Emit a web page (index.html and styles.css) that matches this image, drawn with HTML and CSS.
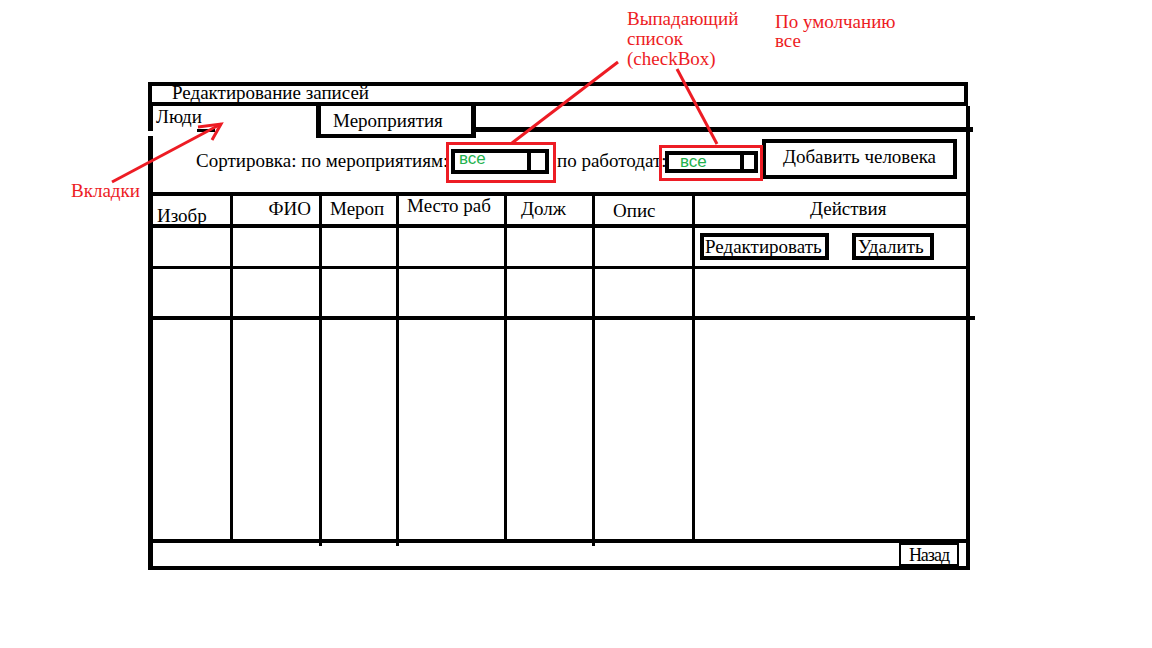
FILE: index.html
```html
<!DOCTYPE html>
<html lang="ru">
<head>
<meta charset="utf-8">
<title>Редактирование записей</title>
<link rel="stylesheet" href="styles.css">
</head>
<body>
<div class="page">
  <div class="frame">
    <div class="titlebar">Редактирование записей</div>
    <div class="main">
      <div class="tabs">
        <div class="tab tab-active">Люди</div>
        <div class="tab tab-inactive">Мероприятия</div>
        <div class="tab-fill"></div>
      </div>
      <div class="sortbar">
        <span class="label label-events">Сортировка: по мероприятиям:</span>
        <div class="select select-events">
          <span class="select-value">все</span>
          <span class="select-arrow"></span>
          <span class="callout"></span>
        </div>
        <span class="label label-employer">по работодат:</span>
        <div class="select select-employer">
          <span class="select-value">все</span>
          <span class="select-arrow"></span>
          <span class="callout"></span>
        </div>
        <button class="btn btn-add">Добавить человека</button>
      </div>
      <div class="grid">
        <div class="cell head h1">Изобр</div>
        <div class="cell head h2">ФИО</div>
        <div class="cell head h3">Мероп</div>
        <div class="cell head h4">Место раб</div>
        <div class="cell head h5">Долж</div>
        <div class="cell head h6">Опис</div>
        <div class="cell head h7 last">Действия</div>

        <div class="cell r1"></div>
        <div class="cell r1"></div>
        <div class="cell r1"></div>
        <div class="cell r1"></div>
        <div class="cell r1"></div>
        <div class="cell r1"></div>
        <div class="cell r1 last actions">
          <button class="btn btn-row btn-edit">Редактировать</button>
          <button class="btn btn-row btn-del">Удалить</button>
        </div>

        <div class="cell r2"></div>
        <div class="cell r2"></div>
        <div class="cell r2"></div>
        <div class="cell r2"></div>
        <div class="cell r2"></div>
        <div class="cell r2"></div>
        <div class="cell r2 last"></div>

        <div class="cell r3"></div>
        <div class="cell r3 nub"></div>
        <div class="cell r3 nub"></div>
        <div class="cell r3"></div>
        <div class="cell r3 nub"></div>
        <div class="cell r3"></div>
        <div class="cell r3 last"></div>
      </div>
      <div class="footer">
        <button class="btn btn-back">Назад</button>
      </div>
    </div>
  </div>

  <svg class="annot" width="1152" height="648" viewBox="0 0 1152 648" aria-hidden="true">
    <rect x="148" y="131" width="5" height="5" fill="#fff"/>
    <rect x="197" y="129" width="18" height="3" fill="#000"/>
    <line x1="512" y1="143" x2="618" y2="62" stroke="#ed1c24" stroke-width="3"/>
    <line x1="717" y1="144" x2="677" y2="69" stroke="#ed1c24" stroke-width="3"/>
    <line x1="112" y1="182" x2="221" y2="124" stroke="#ed1c24" stroke-width="3"/>
    <polyline points="198,127 221,124 212,140" fill="none" stroke="#ed1c24" stroke-width="3"/>
  </svg>

  <div class="note note-select">Выпадающий<br>список<br>(checkBox)</div>
  <div class="note note-default">По умолчанию<br>все</div>
  <div class="note note-tabs">Вкладки</div>
</div>
</body>
</html>
```

FILE: styles.css
```css
* {
  box-sizing: border-box;
}

html, body {
  margin: 0;
  padding: 0;
  background: #fff;
}

body {
  font-family: "Liberation Serif", "Times New Roman", serif;
  font-size: 19px;
  color: #000;
}

.page {
  position: relative;
  width: 1152px;
  height: 648px;
  padding: 82px 0 0 148px;
  overflow: hidden;
}

.frame {
  width: 823px;
}

.titlebar {
  width: 820px;
  height: 24px;
  border: 4px solid #000;
  padding-left: 20px;
  line-height: 13px;
  white-space: nowrap;
}

.main {
  width: 822px;
  height: 464px;
  border-left: 5px solid #000;
  border-right: 4px solid #000;
  border-bottom: 4px solid #000;
  display: flex;
  flex-direction: column;
}

/* tabs */
.tabs {
  display: flex;
  height: 32px;
  align-items: flex-start;
}

.tab {
  line-height: 20px;
  white-space: nowrap;
}

.tab-active {
  width: 163px;
  padding: 1px 0 0 3px;
}

.tab-inactive {
  width: 160px;
  height: 32px;
  border-left: 5px solid #000;
  border-right: 5px solid #000;
  border-bottom: 4px solid #000;
  padding: 5px 0 0 12px;
}

.tab-fill {
  flex: 1;
  height: 26px;
  border-bottom: 5px solid #000;
  margin-right: -7px;
}

/* sort bar */
.sortbar {
  display: flex;
  align-items: flex-start;
  height: 58px;
  border-bottom: 4px solid #000;
}

.label {
  line-height: 20px;
  white-space: nowrap;
  margin-top: 13px;
}

.label-events {
  margin-left: 43px;
  width: 255px;
}

.label-employer {
  margin-left: 8px;
  width: 108px;
}

.select {
  position: relative;
  display: flex;
  border: 4px solid #000;
  background: transparent;
}

.select-value {
  font-family: "Liberation Sans", Arial, sans-serif;
  font-size: 17px;
  color: #22b14c;
}

.select-arrow {
  border-left: 4px solid #000;
}

.select-events {
  width: 98px;
  height: 25px;
  margin-top: 11px;
}

.select-events .select-value {
  width: 72px;
  padding-left: 4px;
  line-height: 12px;
}

.select-events .select-arrow {
  width: 18px;
}

.select-employer {
  width: 93px;
  height: 22px;
  margin-top: 13px;
}

.select-employer .select-value {
  width: 71px;
  padding-left: 11px;
  line-height: 14px;
}

.select-employer .select-arrow {
  width: 14px;
}

.callout {
  position: absolute;
  border: 3px solid #ed1c24;
}

.select-events .callout {
  left: -9px;
  top: -11px;
  width: 110px;
  height: 41px;
}

.select-employer .callout {
  left: -10px;
  top: -10px;
  width: 104px;
  height: 36px;
}

/* buttons */
.btn {
  font-family: "Liberation Serif", "Times New Roman", serif;
  font-size: 19px;
  color: #000;
  background: #fff;
  border: 4px solid #000;
  border-radius: 0;
  padding: 0;
  margin: 0;
  white-space: nowrap;
  display: block;
  text-align: left;
}

.btn-add {
  width: 195px;
  height: 40px;
  margin: 1px 0 0 4px;
  line-height: 27px;
  padding-bottom: 5px;
  text-align: center;
}

.btn-row {
  height: 27px;
  line-height: 17px;
}

.btn-edit {
  width: 129px;
  padding-left: 1px;
}

.btn-del {
  width: 82px;
  padding-left: 2px;
}

/* grid table */
.grid {
  display: grid;
  grid-template-columns: 80px 89px 77px 108px 88px 100px 1fr;
  grid-template-rows: 32px 41px 51px 223px;
}

.cell {
  border-right: 3px solid #000;
  position: relative;
  white-space: nowrap;
  line-height: 20px;
}

.cell.last {
  border-right: 0;
}

.head {
  border-bottom: 4px solid #000;
}

.head.last {
  margin-right: -2px;
}

.r1 {
  border-bottom: 3px solid #000;
}

.r2 {
  border-bottom: 4px solid #000;
}

.r2.last {
  margin-right: -9px;
}

.r3 {
  border-bottom: 4px solid #000;
}

.nub::after {
  content: "";
  position: absolute;
  right: -3px;
  bottom: -7px;
  width: 3px;
  height: 3px;
  background: #000;
}

.h1 { padding: 10px 0 0 4px; }
.h2 { padding: 3px 8px 0 0; text-align: right; }
.h3 { padding: 3px 0 0 8px; }
.h4 { padding: 0 0 0 8px; }
.h5 { padding: 3px 0 0 14px; }
.h6 { padding: 5px 0 0 18px; }
.h7 { padding: 3px 0 0 115px; }

.actions {
  display: flex;
  align-items: flex-start;
  gap: 23px;
  padding: 5px 0 0 5px;
}

/* footer */
.footer {
  height: 23px;
  display: flex;
  justify-content: flex-end;
  padding-right: 7px;
}

.btn-back {
  width: 60px;
  height: 23px;
  border-width: 2px;
  font-size: 18px;
  line-height: 18px;
  text-align: center;
  letter-spacing: -1px;
}

/* annotations */
.annot {
  position: absolute;
  left: 0;
  top: 0;
  pointer-events: none;
}

.note {
  position: absolute;
  color: #ed1c24;
  font-size: 19px;
  white-space: nowrap;
}

.note-select {
  left: 627px;
  top: 9px;
  line-height: 20px;
}

.note-default {
  left: 775px;
  top: 12px;
  line-height: 19px;
}

.note-tabs {
  left: 71px;
  top: 181px;
  line-height: 20px;
}
```
